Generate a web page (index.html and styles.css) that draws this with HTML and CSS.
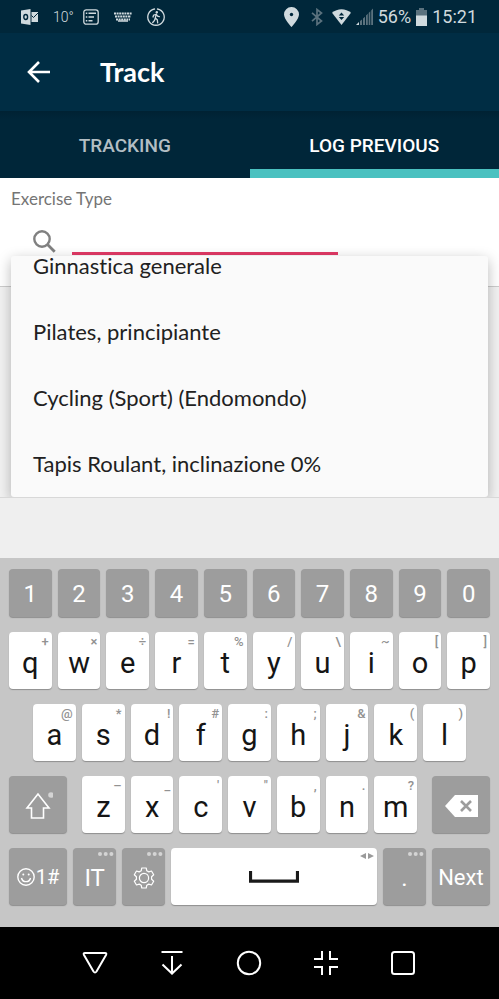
FILE: index.html
```html
<!DOCTYPE html>
<html lang="en">
<head>
<meta charset="utf-8">
<meta name="viewport" content="width=device-width, initial-scale=1">
<title>Track</title>
<link rel="stylesheet" href="styles.css">
</head>
<body>
<div class="status">
  <div class="status-left">
    <svg width="17" height="16" viewBox="0 0 17 16"><path fill="#d0dade" d="M0 1.5 9.500 0v16L0 14.500z"/><ellipse cx="4.700" cy="8" rx="1.900" ry="2.500" fill="none" stroke="#00273b" stroke-width="1.400"/><path fill="#d0dade" d="M10.500 3H17v10h-6.500z"/><path d="M10.500 6.500l2 2L17 4" fill="none" stroke="#00273b"/></svg>
    <span class="temp">10°</span>
    <svg width="16" height="16" viewBox="0 0 16 16" fill="none" stroke="#d0dade" stroke-width="1.300"><rect x=".8" y=".8" width="14.400" height="14.400" rx="2.500"/><path d="M5.500 4.300H13M5.500 8H11M5.500 11.700H9.500M2.800 4.300h1.500M2.800 8h1.500M2.800 11.700h1.500" stroke-width="1.600"/></svg>
    <svg width="18" height="10" viewBox="0 0 18 10" fill="none" stroke="#d0dade" stroke-width="2"><path d="M0 1.500h18M1 4.500h16M2 7.500h14" stroke-dasharray="2 .6"/><path d="M4 9h10" stroke-width="1.500"/></svg>
    <svg width="18" height="18" viewBox="0 0 18 18" fill="none" stroke="#d0dade" stroke-linecap="round"><path d="M10.500 1a8.200 8.200 0 1 1-3 0" stroke-width="1.300"/><circle cx="9.800" cy="4.300" r="1.200" fill="#d0dade" stroke="none"/><path d="M9.200 6.200 8.300 10l2 1.800.4 3M8.300 10l-.8 2.400L5.700 14.500M6 9l.6-1.800 2.600-1 1.400 2 1.700.5" stroke-width="1.300"/></svg>
  </div>
  <div class="status-right">
    <svg width="15" height="20" viewBox="0 0 15 20"><path fill="#d0dade" d="M7.500 0A7.400 7.400 0 0 0 0 7.400C0 12 7.500 20 7.500 20S15 12 15 7.400A7.400 7.400 0 0 0 7.500 0z"/><circle cx="7.500" cy="7.500" r="1.700" fill="#00273b"/></svg>
    <svg class="bt" width="12" height="18" viewBox="0 0 12 18" fill="none" stroke="#5b727e" stroke-width="1.700"><path d="M1 4.800 10.500 13 6 16.500v-15L10.500 5 1 13.200"/></svg>
    <svg width="19" height="16" viewBox="0 0 19 16"><path fill="#d0dade" d="M0 3.800C5.500-.9 13.500-.9 19 3.800L9.500 16z"/><path fill="#00273b" d="M9.500 3.500 12.200 6.600H6.800zM9.500 11 6.800 7.900h5.400z"/></svg>
    <svg width="17" height="17" viewBox="0 0 17 17"><path fill="#5b727e" d="M4 13l2-1.500V17H4zM7 10.500 9 8.800V17H7zM10 7.600l1.800-1.800V17H10zM12.700 5l1.600-1.700V17h-1.600zM15.200 2.400 17 .5V17h-1.800z"/><path fill="#d0dade" d="M0 17l3-3v3z"/></svg>
    <span>56%</span>
    <svg width="11" height="18" viewBox="0 0 11 18"><path fill="#5b727e" d="M3 0h5v2h3v6H0V2h3z"/><path fill="#d0dade" d="M0 7.500h11V18H0z"/></svg>
    <span>15:21</span>
  </div>
</div>

<header class="appbar">
  <button class="back" aria-label="Back"><svg width="23" height="22" viewBox="0 0 23 22" fill="none" stroke="#fff" stroke-width="2.600"><path d="M23 11H2M12 1 2 11l10 10"/></svg></button>
  <h1>Track</h1>
</header>

<nav class="tabs">
  <button class="tab">TRACKING</button>
  <button class="tab active">LOG PREVIOUS</button>
</nav>

<main>
  <form class="exercise">
    <label for="exercise-type">Exercise Type</label>
    <div class="search">
      <svg width="23" height="23" viewBox="0 0 23 23" fill="none" stroke="#808080" stroke-width="2.400"><circle cx="9" cy="9" r="7.700"/><path d="M14.500 14.500l7.200 7.200" stroke-width="2.800"/></svg>
      <input id="exercise-type" type="text" autocomplete="off">
    </div>
  </form>
  <ul class="suggestions">
    <li>Ginnastica generale</li>
    <li>Pilates, principiante</li>
    <li>Cycling (Sport) (Endomondo)</li>
    <li>Tapis Roulant, inclinazione 0%</li>
  </ul>
</main>

<div class="strip"></div>

<section class="keyboard" aria-label="Keyboard">
  <div class="row digits">
    <button class="key dark">1</button><button class="key dark">2</button><button class="key dark">3</button><button class="key dark">4</button><button class="key dark">5</button><button class="key dark">6</button><button class="key dark">7</button><button class="key dark">8</button><button class="key dark">9</button><button class="key dark">0</button>
  </div>
  <div class="row">
    <button class="key">q<sup>+</sup></button><button class="key">w<sup>×</sup></button><button class="key">e<sup>÷</sup></button><button class="key">r<sup>=</sup></button><button class="key">t<sup>%</sup></button><button class="key">y<sup>/</sup></button><button class="key">u<sup>\</sup></button><button class="key">i<sup>~</sup></button><button class="key">o<sup>[</sup></button><button class="key">p<sup>]</sup></button>
  </div>
  <div class="row inset">
    <button class="key">a<sup>@</sup></button><button class="key">s<sup>*</sup></button><button class="key">d<sup>!</sup></button><button class="key">f<sup>#</sup></button><button class="key">g<sup>:</sup></button><button class="key">h<sup>;</sup></button><button class="key">j<sup>&amp;</sup></button><button class="key">k<sup>(</sup></button><button class="key">l<sup>)</sup></button>
  </div>
  <div class="row shift-row">
    <button class="key dark" aria-label="Shift"><svg class="shift" width="30" height="30" viewBox="0 0 30 30"><path d="M15 3 4 17h4.500v10h12V17H26z" fill="none" stroke="#fff" stroke-width="1.600"/><circle cx="28" cy="4" r="2.800" fill="#d4d4d4"/></svg></button>
    <div class="row">
      <button class="key">z<sup>–</sup></button><button class="key">x<sup>_</sup></button><button class="key">c<sup>'</sup></button><button class="key">v<sup>"</sup></button><button class="key">b<sup>,</sup></button><button class="key">n<sup>.</sup></button><button class="key">m<sup>?</sup></button>
    </div>
    <button class="key dark" aria-label="Backspace"><svg width="33" height="22" viewBox="0 0 33 22"><path d="M0 11 10 0h23v22H10z" fill="#fff"/><path d="M16 6l10 10M26 6 16 16" stroke="#9d9d9d" stroke-width="2.600"/></svg></button>
  </div>
  <div class="row bottom-row">
    <button class="key dark symbols"><svg width="18" height="18" viewBox="0 0 18 18" fill="none" stroke="#fff" stroke-width="1.400"><circle cx="9" cy="9" r="8.200"/><path d="M4.500 10a4.600 4.600 0 0 0 9 0"/><circle cx="6.300" cy="6.500" r="1" fill="#fff" stroke="none"/><circle cx="11.700" cy="6.500" r="1" fill="#fff" stroke="none"/></svg>1#</button>
    <button class="key dark">IT<svg class="dots" width="16" height="4" viewBox="0 0 16 4"><circle cx="2" cy="2" r="2"/><circle cx="7.700" cy="2" r="2"/><circle cx="13.400" cy="2" r="2"/></svg></button>
    <button class="key dark" aria-label="Settings"><svg width="22" height="22" viewBox="0 0 22 22" fill="none" stroke="#fff" stroke-width="1.200" stroke-linejoin="round"><path d="M8.800 1h4.400l.6 2.800 2 1.100 2.700-.9 2.200 3.800-2.100 2v2.400l2.100 2-2.200 3.800-2.700-.9-2 1.100-.6 2.800H8.800l-.6-2.800-2-1.100-2.700.9-2.200-3.800 2.100-2V9.800l-2.100-2L3.500 4l2.700.9 2-1.100z"/><circle cx="11" cy="11" r="4.600"/></svg><svg class="dots" width="16" height="4" viewBox="0 0 16 4"><circle cx="2" cy="2" r="2"/><circle cx="7.700" cy="2" r="2"/><circle cx="13.400" cy="2" r="2"/></svg></button>
    <button class="key space" aria-label="Space"><svg width="50" height="12" viewBox="0 0 50 12"><path d="M1.500 0v10.200h47V0" fill="none" stroke="#1a1a1a" stroke-width="3.200"/></svg><svg class="arrows" width="14" height="8" viewBox="0 0 14 8"><path d="M6 1v6L0 4zM8 1v6l6-3z" fill="#9a9a9a"/></svg></button>
    <button class="key dark">.<svg class="dots" width="16" height="4" viewBox="0 0 16 4"><circle cx="2" cy="2" r="2"/><circle cx="7.700" cy="2" r="2"/><circle cx="13.400" cy="2" r="2"/></svg></button>
    <button class="key dark next">Next</button>
  </div>
</section>

<nav class="system" aria-label="System">
  <button aria-label="Hide keyboard"><svg width="26" height="26" viewBox="0 0 26 26"><path d="M3 3h20q2 0 1 2L14.500 21.500q-1.500 2-3 0L2 5Q1 3 3 3z"/></svg></button>
  <button aria-label="Notifications"><svg width="26" height="26" viewBox="0 0 26 26"><path d="M2.500 2h21M13 6v17.500M3.500 14.500l9.500 9 9.500-9"/></svg></button>
  <button aria-label="Home"><svg width="26" height="26" viewBox="0 0 26 26"><circle cx="13" cy="13" r="11.200"/></svg></button>
  <button aria-label="Shrink"><svg width="26" height="26" viewBox="0 0 26 26"><path d="M9 1v8H1M17 1v8h8M9 25v-8H1M17 25v-8h8"/></svg></button>
  <button aria-label="Recent apps"><svg width="26" height="26" viewBox="0 0 26 26"><rect x="2" y="2" width="22" height="22" rx="2.500"/></svg></button>
</nav>
</body>
</html>
```
FILE: styles.css
```css
* {
  box-sizing: border-box;
}

body {
  margin: 0;
  min-height: 100vh;
  display: flex;
  flex-direction: column;
  background: #fff;
  font-family: Roboto, "Liberation Sans", sans-serif;
}

button {
  border: 0;
  padding: 0;
  margin: 0;
  background: none;
  font: inherit;
  color: inherit;
}

svg {
  display: block;
  flex: none;
}

.status {
  height: 33px;
  padding: 0 22px 0 21px;
  display: flex;
  align-items: center;
  justify-content: space-between;
  background: #00273a;
  color: #d0dade;
  font-size: 18px;
}

.status-left,
.status-right {
  display: flex;
  align-items: center;
}

.status-left {
  gap: 15px;
}

.temp {
  margin-right: -6px;
  font-size: 14px;
  font-weight: 300;
}

.status-right {
  gap: 5px;
}

.bt {
  margin: 0 4px 0 7px;
}

.appbar {
  height: 78px;
  padding-left: 27px;
  display: flex;
  align-items: center;
  gap: 50px;
  background: #002d44;
  color: #fff;
}

h1 {
  margin: 0;
  font: 700 27px/32px Lato, sans-serif;
}

.tabs {
  height: 67px;
  display: flex;
  background: linear-gradient(#002233, #002639 8px);
}

.tab {
  flex: 1;
  border-bottom: 9px solid transparent;
  padding-top: 10px;
  font-size: 19px;
  font-weight: 500;
  color: #b3bec4;
}

.tab.active {
  border-color: #4ac1c0;
  color: #fff;
}

main {
  position: relative;
  flex: 1 0 320px;
  background: #f2f2f2;
  border-bottom: 1px solid #d8d8d8;
  overflow: hidden;
}

.exercise {
  height: 109px;
  padding: 10px 11px 0;
  background: #fff;
  border-bottom: 1px solid #ccc;
}

.exercise label {
  display: block;
  font: 17px/21px Lato, sans-serif;
  color: #757575;
}

.search {
  display: flex;
  align-items: flex-end;
  gap: 16px;
  height: 46px;
  padding: 0 150px 0 22px;
}

.search svg {
  margin-bottom: 2px;
}

.search input {
  flex: 1;
  min-width: 0;
  height: 36px;
  border: 0;
  border-bottom: 3px solid #e23a66;
  padding: 0;
  outline: 0;
  background: none;
  font: 22px/28px Lato, sans-serif;
}

.suggestions {
  position: absolute;
  inset: 78px 11px 0;
  margin: 0;
  padding: 0 22px;
  display: flex;
  flex-direction: column;
  justify-content: flex-end;
  list-style: none;
  overflow: hidden;
  background: #fafafa;
  border-radius: 3px;
  box-shadow: 0 4px 14px rgba(0, 0, 0, 0.28);
  font: 22px/20px Lato, sans-serif;
  font-variant-ligatures: none;
  color: #212121;
}

.suggestions li {
  flex: none;
  height: 66px;
  display: flex;
  align-items: center;
  white-space: nowrap;
}

.strip {
  height: 60px;
  background: #efefef;
}

.keyboard {
  padding: 11px 9px 22px;
  display: flex;
  flex-direction: column;
  gap: 15px;
  background: #c6c6c6;
}

.row {
  display: flex;
  gap: 6px;
  height: 57px;
}

.digits {
  height: 48px;
}

.inset {
  padding: 0 24px;
}

.shift-row {
  display: grid;
  grid-template-columns: 58fr 335fr 58fr;
  gap: 15px;
}

.bottom-row {
  display: grid;
  grid-template-columns: 58fr 43fr 43fr 205fr 43fr 58fr;
}

.key {
  position: relative;
  flex: 1;
  min-width: 0;
  display: flex;
  align-items: center;
  justify-content: center;
  padding-top: 4px;
  background: #fff;
  border-radius: 4px;
  box-shadow: 0 1px 1px #8e8e8e;
  font-size: 29px;
  color: #151515;
}

.key.dark {
  padding-top: 2px;
  background: #9d9d9d;
  color: #fff;
  font-size: 24px;
}

.key.symbols {
  padding-top: 0;
  font-size: 20px;
  gap: 1px;
}

.key.next {
  font-size: 22px;
}

.key.space {
  padding-top: 0;
}

.key sup {
  position: absolute;
  top: 2px;
  right: 3px;
  font-size: 13px;
  font-weight: 500;
  line-height: 16px;
  color: #929292;
}

.dots {
  position: absolute;
  top: 4px;
  right: 2px;
  fill: #d4d4d4;
}

.arrows {
  position: absolute;
  top: 4px;
  right: 3px;
}

.system {
  height: 72px;
  padding: 0 58px 0 56px;
  display: flex;
  align-items: center;
  background: #000;
}

.system button {
  flex: 1;
  display: flex;
  justify-content: center;
}

.system svg {
  fill: none;
  stroke: #fff;
  stroke-width: 2px;
}
```
